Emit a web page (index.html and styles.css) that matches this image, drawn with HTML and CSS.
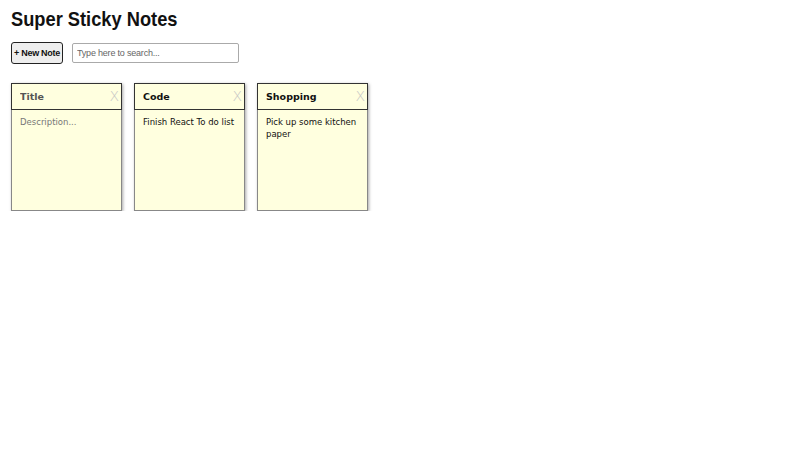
FILE: index.html
```html
<!doctype html>
<html lang="en">
  <head>
    <meta charset="UTF-8" />
    <meta name="viewport" content="width=device-width, initial-scale=1.0" />
    <title>Super Sticky Notes</title>
    <link rel="stylesheet" href="styles.css">
  </head>
  <body>
    <header class="app-header">
      <h1 class="app-title">Super Sticky Notes</h1>
      <aside class="app-controls">
        <button class="add-new">+ New Note</button>
        <input class="search" type="text" placeholder="Type here to search..." />
      </aside>
    </header>
    <ul class="notes-list">
      <li class="note">
        <div class="note-head">
          <input class="note-title" type="text" placeholder="Title" />
          <span class="note-delete">X</span>
        </div>
        <textarea class="note-description" placeholder="Description..."></textarea>
      </li>
      <li class="note">
        <div class="note-head">
          <input class="note-title" type="text" value="Code" />
          <span class="note-delete">X</span>
        </div>
        <textarea class="note-description">Finish React To do list</textarea>
      </li>
      <li class="note">
        <div class="note-head">
          <input class="note-title" type="text" value="Shopping" />
          <span class="note-delete">X</span>
        </div>
        <textarea class="note-description">Pick up some kitchen paper</textarea>
      </li>
    </ul>
  </body>
</html>
```

FILE: styles.css
```css
* {
  margin: 0;
  padding: 0;
  box-sizing: border-box;
}
body {
  background: #fff;
  font-family: "Liberation Sans", Arial, sans-serif;
  color: #111;
  padding: 0 11px;
}
.app-header {
  padding-top: 8px;
}
.app-title {
  font-size: 21px;
  line-height: 22px;
  font-weight: bold;
  transform: scaleX(0.87);
  transform-origin: left center;
}
.app-controls {
  display: flex;
  align-items: center;
  gap: 9px;
  margin-top: 12px;
}
.add-new {
  font-family: "Liberation Sans", Arial, sans-serif;
  font-size: 9px;
  font-weight: bold;
  letter-spacing: -0.3px;
  white-space: nowrap;
  height: 22px;
  width: 52px;
  padding: 0;
  background: #eee;
  border: 1px solid #222;
  border-radius: 3px;
  color: #111;
}
.search {
  width: 167px;
  height: 20px;
  border: 1px solid #aaa;
  border-radius: 2px;
  padding: 0 4px;
  font-family: "Liberation Sans", Arial, sans-serif;
  font-size: 9px;
  letter-spacing: -0.2px;
  color: #555;
}
.search::placeholder {
  color: #666;
}
.notes-list {
  list-style: none;
  display: flex;
  gap: 12px;
  margin-top: 19px;
}
.note {
  width: 111px;
  height: 128px;
  background: #ffffdf;
  border: 1px solid #888;
  box-shadow: 1px 1px 3px rgba(0, 0, 0, 0.35);
  display: flex;
  flex-direction: column;
  font-family: "Comic Sans MS", "DejaVu Sans", sans-serif;
}
.note-head {
  display: flex;
  align-items: center;
  height: 27px;
  border: 1px solid #333;
  margin: -1px -1px 0;
}
.note-title {
  flex: 1;
  min-width: 0;
  background: none;
  border: none;
  outline: none;
  padding-left: 8px;
  font-family: inherit;
  font-size: 9.5px;
  font-weight: bold;
  color: #111;
}
.note-title::placeholder {
  color: #555;
}
.note-delete {
  font-family: "DejaVu Sans", sans-serif;
  font-weight: 200;
  color: #c4c4c4;
  font-size: 14px;
  padding-right: 2px;
  align-self: flex-start;
  margin-top: 4px;
}
.note-description {
  flex: 1;
  background: none;
  border: none;
  outline: none;
  resize: none;
  padding: 6px 8px;
  font-family: inherit;
  font-size: 8.5px;
  line-height: 12px;
  color: #111;
}
.note-description::placeholder {
  color: #777;
}
```
